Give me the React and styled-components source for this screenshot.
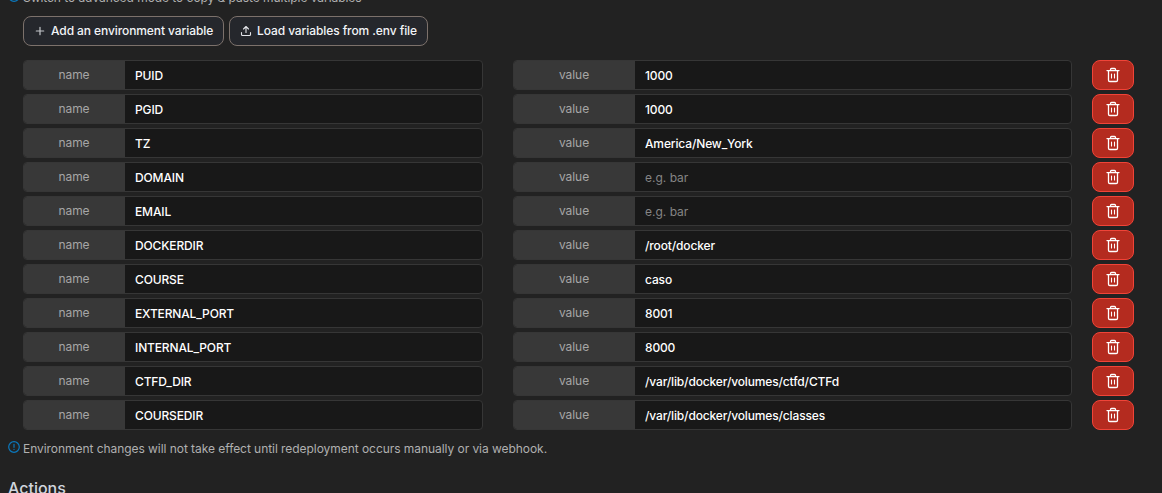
import React from "react";
import styled, { createGlobalStyle } from "styled-components";

const GlobalStyle = createGlobalStyle`
  * { box-sizing: border-box; }
  html, body { margin: 0; height: 100%; overflow: hidden; background: #222222; }
  body { font-family: Inter, "Liberation Sans", sans-serif; font-size: 12px; color: #fff; }
`;

const Page = styled.main`
  height: 493px;
  overflow: hidden;
  background: #222222;
  padding: 0 28px 0 8px;
`;

const Hint = styled.div`
  display: flex;
  align-items: flex-start;
  gap: 3px;
  height: 20px;
  line-height: 20px;
  font-size: 12px;
  letter-spacing: -0.052px;
  color: #b0b0b0;
  white-space: nowrap;
  margin-top: ${(p) => p.$top}px;

  svg { flex: none; margin-top: 2px; }
`;

const Toolbar = styled.div`
  display: flex;
  gap: 5px;
  margin: 8px 0 14px 15px;
`;

const ToolButton = styled.button`
  display: flex;
  align-items: center;
  gap: 5px;
  width: ${(p) => p.$width}px;
  height: 30px;
  padding: 0 0 1px 10px;
  border: 1px solid #7c716b;
  border-radius: 8px;
  background: #25272c;
  color: #f2f4f7;
  font: 500 12px/18px Inter, "Liberation Sans", sans-serif;
  letter-spacing: -0.09px;
  white-space: nowrap;

  svg { flex: none; margin-top: 1px; }
`;

const List = styled.div`
  display: flex;
  flex-direction: column;
  gap: 4px;
  margin-left: 15px;
`;

const Row = styled.div`
  display: flex;
  height: 30px;
`;

const Group = styled.div`
  display: flex;
  width: ${(p) => p.$width}px;
  margin-right: ${(p) => p.$after}px;
  border: 1px solid #363636;
  border-radius: 4px;
  background: #181818;
  overflow: hidden;
`;

const Addon = styled.span`
  width: ${(p) => p.$width}px;
  padding-right: 1px;
  background: #383838;
  color: #a6a6a6;
  font-size: 12px;
  letter-spacing: -0.05px;
  line-height: 27px;
  text-align: center;
`;

const Field = styled.input`
  flex: 1;
  min-width: 0;
  border: 0;
  outline: 0;
  padding: 2px 10px 0;
  background: transparent;
  color: #fff;
  font: 500 12px/18px Inter, "Liberation Sans", sans-serif;
  letter-spacing: -0.14px;

  &::placeholder { color: #858585; opacity: 1; font-weight: 400; letter-spacing: 0; }
`;

const DeleteButton = styled.button`
  display: flex;
  align-items: center;
  justify-content: center;
  width: 42px;
  height: 30px;
  padding: 0;
  border: 1px solid #f04438;
  border-radius: 8px;
  background: #b42b1f;
  color: #fff;
`;

const Heading = styled.h2`
  margin: 18px 0 0;
  font-size: 16px;
  line-height: 22px;
  font-weight: 500;
  color: #d0d5dd;
`;

const InfoIcon = () => (
  <svg width="12" height="12" viewBox="0 0 12 12" fill="none" stroke="#0b78bd" strokeLinecap="round">
    <circle cx="6" cy="6" r="5.3" strokeWidth="1.2" />
    <path d="M6 3.3v3M6 8.4v.1" strokeWidth="1.2" />
  </svg>
);

const PlusIcon = () => (
  <svg width="12" height="12" viewBox="0 0 12 12" fill="none" stroke="#c4c6ca" strokeWidth="1.2" strokeLinecap="round">
    <path d="M6 2.3v7.4M2.3 6h7.4" />
  </svg>
);

const UploadIcon = () => (
  <svg width="12" height="12" viewBox="0 0 12 12" fill="none" stroke="#e4e6ea" strokeWidth="1.1" strokeLinecap="round" strokeLinejoin="round">
    <path d="M1.5 7.5v2q0 1 1 1h7q1 0 1-1v-2M6 7.5v-6M3.5 4L6 1.5L8.5 4" />
  </svg>
);

const TrashIcon = () => (
  <svg width="14" height="16" viewBox="0 0 14 16" fill="none" stroke="currentColor" strokeWidth="1.3" strokeLinecap="round" strokeLinejoin="round">
    <path d="M1 3.6h12M2.5 3.6v9.6q0 1.3 1.3 1.3h6.4q1.3 0 1.3-1.3V3.6M4.5 3.5V2.5q0-1 1-1h3q1 0 1 1v1" />
    <path d="M5.5 7v4M8.5 7v4" strokeWidth="1.1" />
  </svg>
);

const variables = [
  ["PUID", "1000"],
  ["PGID", "1000"],
  ["TZ", "America/New_York"],
  ["DOMAIN", ""],
  ["EMAIL", ""],
  ["DOCKERDIR", "/root/docker"],
  ["COURSE", "caso"],
  ["EXTERNAL_PORT", "8001"],
  ["INTERNAL_PORT", "8000"],
  ["CTFD_DIR", "/var/lib/docker/volumes/ctfd/CTFd"],
  ["COURSEDIR", "/var/lib/docker/volumes/classes"],
];

export default function App() {
  return (
    <Page>
      <GlobalStyle />
      <Hint $top={-12}>
        <InfoIcon />
        <span>Switch to advanced mode to copy &amp; paste multiple variables</span>
      </Hint>
      <Toolbar>
        <ToolButton $width={201}><PlusIcon />Add an environment variable</ToolButton>
        <ToolButton $width={199}><UploadIcon />Load variables from .env file</ToolButton>
      </Toolbar>
      <List>
        {variables.map(([name, value]) => (
          <Row key={name}>
            <Group $width={460} $after={30}>
              <Addon $width={101}>name</Addon>
              <Field defaultValue={name} aria-label="name" spellCheck={false} />
            </Group>
            <Group $width={559} $after={20}>
              <Addon $width={121}>value</Addon>
              <Field defaultValue={value} placeholder="e.g. bar" aria-label="value" spellCheck={false} />
            </Group>
            <DeleteButton aria-label="Delete"><TrashIcon /></DeleteButton>
          </Row>
        ))}
      </List>
      <Hint $top={9}>
        <InfoIcon />
        <span>Environment changes will not take effect until redeployment occurs manually or via webhook.</span>
      </Hint>
      <Heading>Actions</Heading>
    </Page>
  );
}
